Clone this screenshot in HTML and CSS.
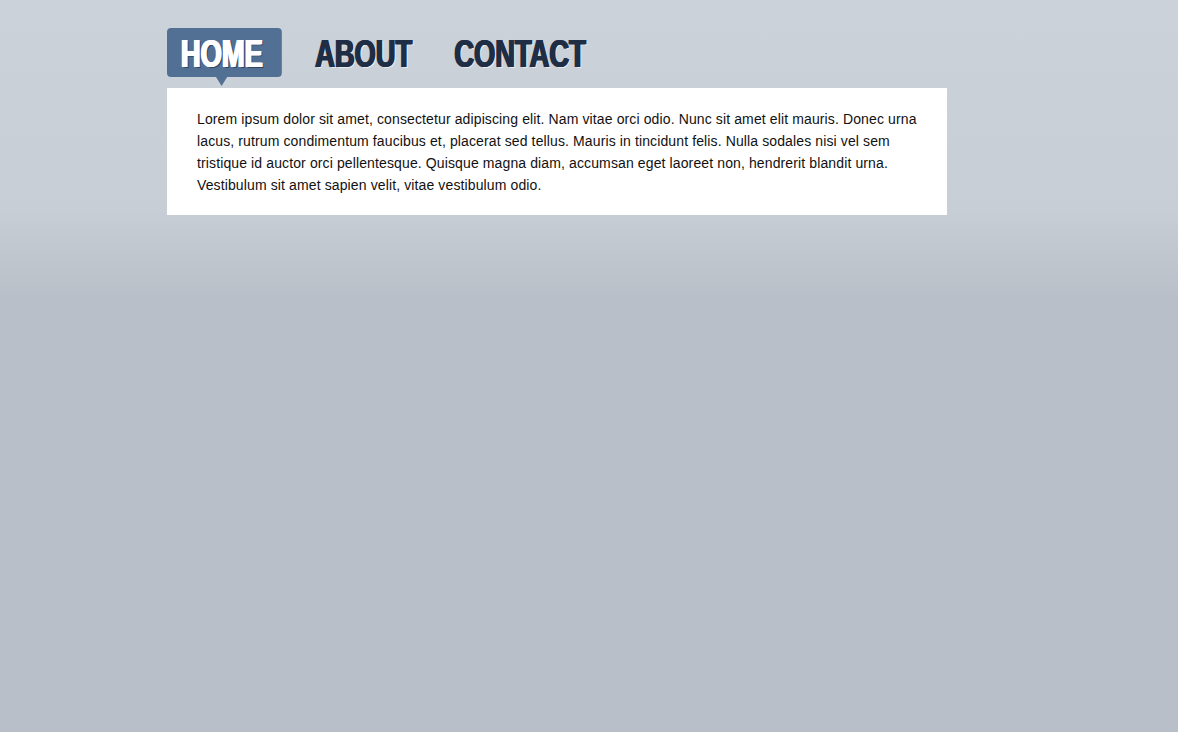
FILE: index.html
```html
<!DOCTYPE html>
<html lang="en">
<head>
<meta charset="utf-8">
<title>Home</title>
<link rel="stylesheet" href="styles.css">
</head>
<body>
<div class="page">
  <nav class="nav">
    <a class="nav-link is-active" href="#">HOME</a>
    <a class="nav-link" href="#">ABOUT</a>
    <a class="nav-link" href="#">CONTACT</a>
  </nav>
  <main class="content">
    <p>Lorem ipsum dolor sit amet, consectetur adipiscing elit. Nam vitae orci odio. Nunc sit amet elit mauris. Donec urna lacus, rutrum condimentum faucibus et, placerat sed tellus. Mauris in tincidunt felis. Nulla sodales nisi vel sem tristique id auctor orci pellentesque. Quisque magna diam, accumsan eget laoreet non, hendrerit blandit urna. Vestibulum sit amet sapien velit, vitae vestibulum odio.</p>
  </main>
</div>
</body>
</html>
```
FILE: styles.css
```css
html, body {
  margin: 0;
  padding: 0;
}
body {
  min-height: 100vh;
  background: #b8bfc8 linear-gradient(to bottom, #cbd2d9 0px, #c8ced5 210px, #b8bfc8 300px) no-repeat;
  font-family: "Liberation Sans", Arial, sans-serif;
}
.page {
  width: 780px;
  margin-left: 167px;
  padding-top: 28px;
}
/* condensed headline type: Liberation Sans Bold squeezed horizontally */
.nav {
  display: flex;
  gap: 23px;
  height: 49px;
  margin-bottom: 11px;
  transform: scaleX(0.7);
  transform-origin: left top;
}
.nav-link {
  position: relative;
  display: block;
  padding: 0 18.6px;
  height: 49px;
  line-height: 51px;
  font-family: "Liberation Sans", Arial, sans-serif;
  font-weight: bold;
  font-size: 39px;
  color: #1f2d45;
  text-decoration: none;
  text-shadow: 1.2px 0 0 #1f2d45, 2.4px 0 0 #1f2d45, 3.6px 1px 0 rgba(255,255,255,0.6);
  border-radius: 6px / 4px;
  white-space: nowrap;
}
.nav-link.is-active {
  width: 125px;
  padding-right: 20.7px;
  margin-right: 4.5px;
  background: #526f94;
  color: #ffffff;
  text-shadow: 1.2px 0 0 #ffffff, 2.4px 0 0 #ffffff, 3.8px 1px 0 #33445e;
}
.nav-link.is-active::after {
  content: "";
  position: absolute;
  left: 70px;
  top: 49px;
  border-left: 8.5px solid transparent;
  border-right: 8.5px solid transparent;
  border-top: 9px solid #526f94;
}
.content {
  background: #ffffff;
  padding: 20px 30px 19px;
}
.content p {
  margin: 0;
  font-size: 14px;
  line-height: 22px;
  letter-spacing: 0.12px;
  color: #111111;
}
```
